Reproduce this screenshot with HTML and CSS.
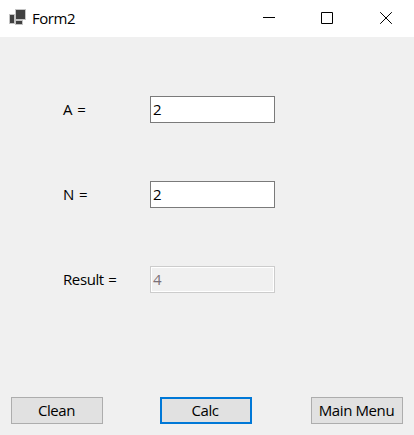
FILE: index.html
```html
<!DOCTYPE html>
<html lang="en">
<head>
<meta charset="utf-8">
<title>Form2</title>
<link rel="stylesheet" href="styles.css">
</head>
<body>
<div class="window">
  <header class="titlebar">
    <svg class="app-icon" width="18" height="18" viewBox="0 0 18 18">
      <path fill="#c4c4c4" d="M7 0h11v11h-3v5H7v-1H1V5h6z"/>
      <path fill="#404040" d="M8 1h9v9H8zM2 6h4v8H2zM8 12h6v3H8z"/>
    </svg>
    <h1 class="title">Form2</h1>
    <div class="controls">
      <svg width="12" height="12" viewBox="0 0 12 12"><path fill="#000" d="M0 5h12v1H0z"/></svg>
      <svg width="12" height="12" viewBox="0 0 12 12"><path fill="none" stroke="#000" d="M.5.5h11v11H.5z"/></svg>
      <svg width="12" height="12" viewBox="0 0 12 12"><path fill="none" stroke="#000" d="M.2.2l11.6 11.6M11.8.2L.2 11.8"/></svg>
    </div>
  </header>
  <main class="form">
    <div class="row"><label class="label" for="a">A =</label><input class="field" id="a" value="2"></div>
    <div class="row"><label class="label" for="n">N =</label><input class="field" id="n" value="2"></div>
    <div class="row"><label class="label label-result" for="result">Result =</label><input class="field" id="result" value="4" disabled></div>
  </main>
  <footer class="actions">
    <button class="button">Clean</button>
    <button class="button button-default">Calc</button>
    <button class="button button-menu">Main Menu</button>
  </footer>
</div>
</body>
</html>
```
FILE: styles.css
```css
* { box-sizing: border-box; }
body {
  margin: 0;
  background: #f0f0f0;
  color: #000;
  font: 15px/20px "Open Sans", "Noto Sans", sans-serif;
  letter-spacing: -0.45px;
}
.window {
  display: flex;
  flex-direction: column;
  width: 414px;
  height: 435px;
}
.titlebar {
  display: flex;
  align-items: center;
  height: 37px;
  padding: 0 22px 1px 8px;
  background: #fff;
}
.title {
  margin: 0 0 0 6px;
  font: inherit;
}
.controls {
  display: flex;
  gap: 47px;
  margin-left: auto;
}
.controls svg { display: block; }
.controls svg:first-child { margin-right: -1px; }
.form {
  display: flex;
  flex-direction: column;
  gap: 58px;
  padding: 59px 0 0 63px;
}
.row {
  display: flex;
  height: 27px;
}
.label {
  width: 87px;
  padding-top: 3px;
  letter-spacing: -0.1px;
  word-spacing: 1px;
}
.label-result { letter-spacing: -0.4px; }
.field {
  width: 125px;
  height: 27px;
  margin: 0;
  padding: 0 2px 2px;
  border: 1px solid #7a7a7a;
  border-radius: 0;
  background: #fff;
  color: #000;
  font: inherit;
  outline: none;
}
.field:disabled {
  border-color: #ccc;
  background: #f0f0f0;
  box-shadow: inset 0 0 0 1px #fff;
  color: #7b7078;
}
.actions {
  display: flex;
  margin-top: auto;
  padding: 0 11px 11px;
}
.button {
  width: 92px;
  height: 27px;
  margin: 0;
  padding: 0 1px 2px 0;
  border: 1px solid #adadad;
  border-radius: 0;
  background: #e1e1e1;
  color: #000;
  font: inherit;
  letter-spacing: -0.4px;
  white-space: nowrap;
}
.button-default {
  margin-left: 57px;
  padding-right: 2px;
  border: 2px solid #0078d7;
}
.button-menu {
  margin-left: auto;
  padding-right: 1px;
}
```
